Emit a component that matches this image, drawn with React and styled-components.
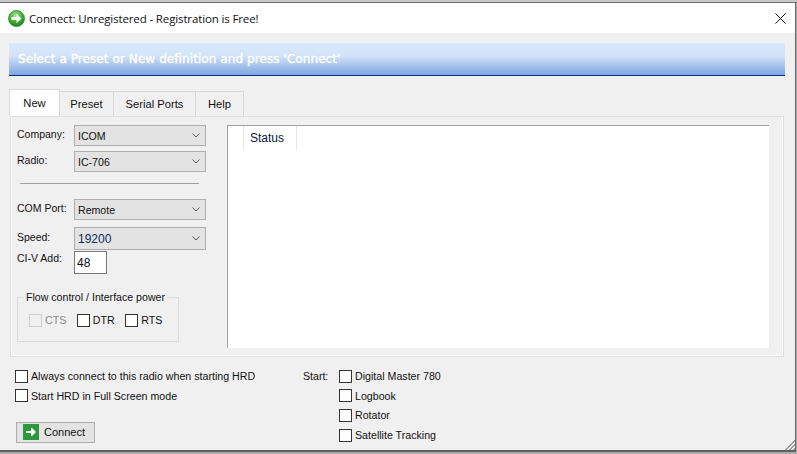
import React from 'react';
import styled, { createGlobalStyle } from 'styled-components';

const GlobalStyle = createGlobalStyle`
  html, body {
    margin: 0;
    padding: 0;
    background: #a9a9a9;
  }
  * { box-sizing: border-box; }
`;

const TitleIcon = () => (
  <svg width="17" height="17" viewBox="0 0 17 17">
    <defs>
      <radialGradient id="orb" cx="45%" cy="30%" r="75%">
        <stop offset="0%" stopColor="#a6e58f" />
        <stop offset="55%" stopColor="#3fae35" />
        <stop offset="100%" stopColor="#1c7a1e" />
      </radialGradient>
    </defs>
    <circle cx="8.5" cy="8.5" r="8" fill="url(#orb)" stroke="#2a8a2c" strokeWidth="0.8" />
    <path d="M3.5 7h5V4l5 4.5-5 4.5v-3h-5z" fill="#fff" />
  </svg>
);

const ConnectIcon = () => (
  <svg width="16" height="16" viewBox="0 0 16 16">
    <rect width="16" height="16" fill="#2c9a3a" />
    <path d="M3 7h5V4l1 0 4 4-4 4-1 0V9H3z" fill="#fff" />
  </svg>
);

const Chevron = () => (
  <svg width="8" height="5" viewBox="0 0 8 5">
    <path d="M.5.5L4 4 7.5.5" fill="none" stroke="#555" strokeWidth="1" />
  </svg>
);

const CloseIcon = () => (
  <svg width="11" height="11" viewBox="0 0 11 11">
    <path d="M.5.5l10 10M10.5.5l-10 10" stroke="#111" strokeWidth="1" />
  </svg>
);

const Field = ({ label, value, tall, blue, spaced }) => (
  <FormRow $tall={tall} $spaced={spaced}>
    <FieldLabel $tall={tall}>{label}</FieldLabel>
    <Select $tall={tall} $blue={blue}>
      <span>{value}</span>
      <Chevron />
    </Select>
  </FormRow>
);

const Check = ({ label, disabled }) => (
  <CheckLabel $disabled={disabled}>
    <Box $disabled={disabled} />
    {label}
  </CheckLabel>
);

const App = () => (
  <Page>
    <GlobalStyle />
    <TopStrip />
    <Window>
      <TitleBar>
        <TitleIcon />
        <TitleText>Connect: Unregistered - Registration is Free!</TitleText>
        <CloseButton><CloseIcon /></CloseButton>
      </TitleBar>
      <Body>
        <Banner>Select a Preset or New definition and press 'Connect'</Banner>
        <Tabs>
          <Tab $active $width={51}>New</Tab>
          <Tab $width={55}>Preset</Tab>
          <Tab $width={83}>Serial Ports</Tab>
          <Tab $width={49}>Help</Tab>
        </Tabs>
        <TabPanel>
          <LeftColumn>
            <Field label="Company:" value="ICOM" />
            <Field label="Radio:" value="IC-706" />
            <Divider />
            <Field label="COM Port:" value="Remote" spaced />
            <Field label="Speed:" value="19200" tall blue />
            <AddressRow>
              <AddressLabel>CI-V Add:</AddressLabel>
              <AddressInput>48</AddressInput>
            </AddressRow>
            <FlowGroup>
              <FlowLegend>Flow control / Interface power</FlowLegend>
              <FlowChecks>
                <Check label="CTS" disabled />
                <Check label="DTR" />
                <Check label="RTS" />
              </FlowChecks>
            </FlowGroup>
          </LeftColumn>
          <StatusPanel>
            <StatusHeader>Status</StatusHeader>
          </StatusPanel>
        </TabPanel>
        <Footer>
          <FooterLeft>
            <CheckStack>
              <Check label="Always connect to this radio when starting HRD" />
              <Check label="Start HRD in Full Screen mode" />
            </CheckStack>
            <ConnectButton>
              <ConnectIcon />
              Connect
            </ConnectButton>
          </FooterLeft>
          <StartLabel>Start:</StartLabel>
          <CheckStack>
            <Check label="Digital Master 780" />
            <Check label="Logbook" />
            <Check label="Rotator" />
            <Check label="Satellite Tracking" />
          </CheckStack>
        </Footer>
        <Grip />
      </Body>
    </Window>
  </Page>
);

export default App;

const Page = styled.div`
  width: 797px;
  height: 454px;
  overflow: hidden;
  display: flex;
  flex-direction: column;
  font-family: "Liberation Sans", Arial, sans-serif;
  font-size: 10.6px;
  color: #111;
`;

const TopStrip = styled.div`
  height: 3px;
  background: #c8c8c8;
  border-bottom: 1px solid #6e6e6e;
`;

const Window = styled.div`
  width: 796px;
  height: 449px;
  border-right: 1px solid #6a6a6a;
  border-bottom: 2px solid #5f5f5f;
  display: flex;
  flex-direction: column;
`;

const TitleBar = styled.div`
  height: 30px;
  background: #fff;
  display: flex;
  align-items: center;
  padding: 0 9px 0 8px;
  gap: 4px;
`;

const TitleText = styled.div`
  flex: 1;
  font-family: "Open Sans", sans-serif;
  font-size: 11.5px;
  letter-spacing: -0.13px;
`;

const CloseButton = styled.div`
  display: flex;
`;

const Body = styled.div`
  flex: 1;
  background: #f0f0f0;
  padding: 10px 10px 0 9px;
  position: relative;
  display: flex;
  flex-direction: column;
`;

const Banner = styled.div`
  height: 33px;
  width: 776px;
  background: linear-gradient(#dae8fb 0%, #d3e3f9 40%, #7fa6e0 100%);
  border-bottom: 1px solid #0a2c84;
  color: #fff;
  font-family: "DejaVu Sans", sans-serif;
  font-size: 12px;
  letter-spacing: 0.08px;
  -webkit-text-stroke: 0.35px #fff;
  display: flex;
  align-items: center;
  padding-left: 9px;
`;

const Tabs = styled.div`
  display: flex;
  align-items: flex-end;
  height: 27px;
  margin-top: 13px;
`;

const Tab = styled.div`
  width: ${(p) => p.$width}px;
  height: ${(p) => (p.$active ? 27 : 25)}px;
  background: ${(p) => (p.$active ? '#fff' : '#f0f0f0')};
  border: 1px solid #d9d9d9;
  border-bottom: none;
  margin-left: ${(p) => (p.$active ? 0 : -1)}px;
  display: flex;
  align-items: center;
  justify-content: center;
  font-size: 11.2px;
`;

const TabPanel = styled.div`
  width: 774px;
  height: 241px;
  margin-left: 1px;
  border: 2px solid #fff;
  border-top: 1px solid #d9d9d9;
  outline: 1px solid #e0e0e0;
  outline-offset: -1px;
  padding: 8px 13px 7px 5px;
  display: flex;
  gap: 15px;
`;

const LeftColumn = styled.div`
  width: 195px;
  display: flex;
  flex-direction: column;
`;

const FormRow = styled.div`
  display: flex;
  align-items: flex-start;
  height: ${(p) => (p.$tall ? 24 : 21)}px;
  margin-bottom: ${(p) => (p.$tall ? 0 : p.$spaced ? 7 : 5)}px;
`;

const FieldLabel = styled.label`
  width: 57px;
  font-size: 10.5px;
  padding-top: ${(p) => (p.$tall ? 4 : 3)}px;
`;

const Select = styled.div`
  width: 132px;
  height: ${(p) => (p.$tall ? 23 : 21)}px;
  background: #e3e3e3;
  border: 1px solid #adadad;
  display: flex;
  align-items: center;
  justify-content: space-between;
  padding: 0 5px 0 3px;
  color: ${(p) => (p.$blue ? '#0b2f5c' : '#111')};
  font-size: ${(p) => (p.$tall ? 12 : 10.6)}px;
`;

const Divider = styled.div`
  width: 179px;
  height: 1px;
  margin: 6px 0 15px 3px;
  background: #a0a0a0;
`;

const AddressRow = styled.div`
  display: flex;
`;

const AddressLabel = styled(FieldLabel)`
  padding-top: 1px;
`;

const AddressInput = styled.div`
  width: 33px;
  height: 23px;
  background: #fff;
  border: 1px solid #7a7a7a;
  font-size: 12px;
  padding: 4px 0 0 2px;
`;

const FlowGroup = styled.fieldset`
  width: 162px;
  height: 51px;
  margin: 17px 0 0 0;
  padding: 0 0 0 11px;
  border: 1px solid #dcdcdc;
`;

const FlowLegend = styled.legend`
  padding: 0 2px;
  margin-left: -5px;
  font-size: 10.6px;
`;

const FlowChecks = styled.div`
  display: flex;
  gap: 10.5px;
  margin-top: 10px;
`;

const CheckLabel = styled.div`
  display: flex;
  align-items: center;
  gap: 3px;
  height: 14px;
  font-size: 10.65px;
  white-space: nowrap;
  color: ${(p) => (p.$disabled ? '#8a8a8a' : '#111')};
`;

const Box = styled.span`
  width: 13px;
  height: 13px;
  background: ${(p) => (p.$disabled ? '#f0f0f0' : '#fff')};
  border: 1px solid ${(p) => (p.$disabled ? '#cfcfcf' : '#333')};
`;

const StatusPanel = styled.div`
  flex: 1;
  background: #fff;
  border-top: 1px solid #a0a0a0;
  border-left: 1px solid #a0a0a0;
  padding-left: 15px;
`;

const StatusHeader = styled.div`
  width: 54px;
  height: 24px;
  border-left: 1px solid #e5e5e5;
  border-right: 1px solid #e5e5e5;
  display: flex;
  align-items: center;
  padding-left: 6px;
  font-size: 12px;
  color: #0b1a3c;
`;

const Footer = styled.div`
  display: flex;
  padding: 12px 0 0 6px;
`;

const FooterLeft = styled.div`
  width: 288px;
  display: flex;
  flex-direction: column;
`;

const CheckStack = styled.div`
  display: flex;
  flex-direction: column;
  gap: 5.7px;
`;

const ConnectButton = styled.div`
  width: 79px;
  height: 21px;
  margin: 19px 0 0 1px;
  background: #e3e3e3;
  border: 1px solid #adadad;
  display: flex;
  align-items: center;
  gap: 5px;
  padding-left: 6px;
  font-size: 11px;
`;

const StartLabel = styled.div`
  width: 36px;
  padding-top: 1px;
`;

const Grip = styled.div`
  position: absolute;
  right: 0;
  bottom: 0;
  width: 12px;
  height: 12px;
  background: repeating-linear-gradient(135deg, #f0f0f0 0 1.4px, #9a9a9a 1.4px 2.8px);
  clip-path: polygon(100% 0, 100% 100%, 0 100%);
`;
